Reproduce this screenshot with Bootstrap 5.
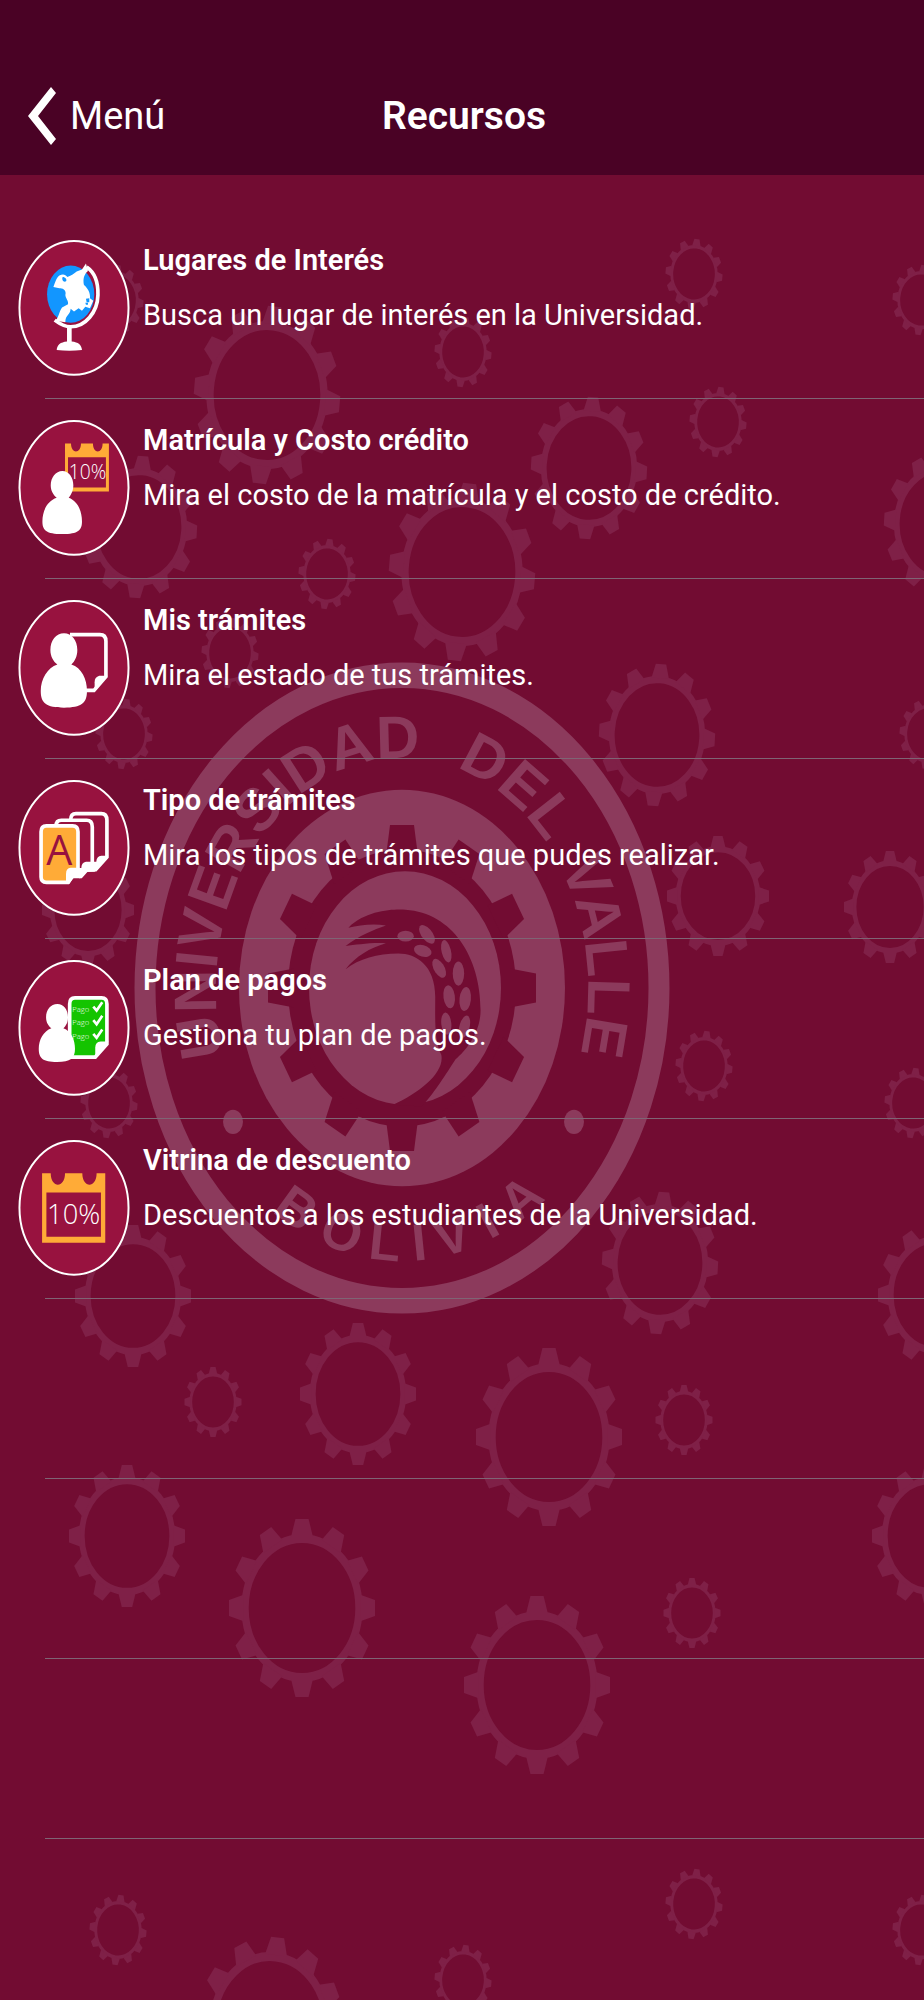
<!DOCTYPE html>
<html lang="es">
<head>
<meta charset="utf-8">
<meta name="viewport" content="width=device-width, initial-scale=1">
<title>Recursos</title>
<link href="https://cdn.jsdelivr.net/npm/bootstrap@5.3.0/dist/css/bootstrap.min.css" rel="stylesheet">
<script src="https://cdn.jsdelivr.net/npm/bootstrap@5.3.0/dist/js/bootstrap.bundle.min.js"></script>
<style>
  body { background: #720c32; color: #fff; font-family: Roboto, "Liberation Sans", sans-serif; }
  .backdrop { z-index: -1; }
  .topbar { background: #4a0225; height: 175px; padding: 56px 24px 0 28px; }
  .topbar .side { flex: 1 1 0; }
  .back-link { color: #fff; gap: 14px; font-size: 38px; line-height: 120px; }
  .topbar h1 { font-size: 39px; line-height: 120px; font-weight: 600; }
  .resources { padding-top: 44px; }
  .resource { height: 180px; padding: 21px 18px 0; }
  .resource::after { content: ""; position: absolute; left: 45px; right: 0; bottom: 0; height: 1px; background: #7f6474; }
  .resource a { gap: 13px; }
  .resource-icon { width: 112px; height: 136px; flex: none; }
  .resource h2, .resource p { font-size: 29px; line-height: 40px; }
  .resource h2 { margin-bottom: 15px; font-weight: 600; }
  .glyph { font-family: "Open Sans", sans-serif; font-weight: 300; }
  .seal-text { font-family: "Liberation Sans", sans-serif; font-weight: 700; font-size: 60px; }
  .seal-text.lower { font-size: 52px; }
</style>
</head>
<body>
<div class="position-relative min-vh-100 overflow-hidden">

<svg class="backdrop position-absolute top-0 start-0 w-100 h-100" viewBox="0 0 924 2000" preserveAspectRatio="xMidYMin slice" aria-hidden="true">
  <defs>
    <path id="tooth" d="M-15-80L-9-100H9L15-80z"/>
    <g id="gear" fill="#7f2047">
      <circle r="78" fill="none" stroke="#7f2047" stroke-width="10"/>
      <use href="#tooth"/><use href="#tooth" transform="rotate(30)"/><use href="#tooth" transform="rotate(60)"/>
      <use href="#tooth" transform="rotate(90)"/><use href="#tooth" transform="rotate(120)"/><use href="#tooth" transform="rotate(150)"/>
      <use href="#tooth" transform="rotate(180)"/><use href="#tooth" transform="rotate(210)"/><use href="#tooth" transform="rotate(240)"/>
      <use href="#tooth" transform="rotate(270)"/><use href="#tooth" transform="rotate(300)"/><use href="#tooth" transform="rotate(330)"/>
    </g>
    <g id="gs"><use href="#gear" transform="scale(.285 .35)"/></g>
    <g id="gst"><use href="#gear" transform="scale(.285 .35) rotate(6)"/></g>
    <g id="gm"><use href="#gear" transform="scale(.58 .71)"/></g>
    <g id="gmt"><use href="#gear" transform="scale(.58 .71) rotate(4)"/></g>
    <g id="gl"><use href="#gear" transform="scale(.73 .89)"/></g>
    <g id="glt"><use href="#gear" transform="scale(.73 .89) rotate(6)"/></g>
    <path id="notch" d="M-16-108L-12-134H12L16-108z"/>
    <path id="arcTop" d="M402 1218A186 230 0 0 1 402 758A186 230 0 0 1 402 1218"/>
    <path id="arcBottom" d="M176 988A226 273 0 0 0 628 988"/>
  </defs>

  <use href="#gst" x="694" y="274"/><use href="#gst" x="921" y="300"/><use href="#gst" x="115" y="300"/>
  <use href="#gst" x="463" y="352"/><use href="#gst" x="718" y="422"/><use href="#glt" x="267" y="395"/>
  <use href="#gmt" x="589" y="468"/><use href="#gmt" x="139" y="527"/><use href="#gmt" x="942" y="524"/>
  <use href="#gst" x="327" y="574"/><use href="#glt" x="462" y="572"/><use href="#gst" x="230" y="653"/>
  <use href="#gmt" x="657" y="735"/><use href="#gst" x="124" y="734"/><use href="#gst" x="928" y="734"/>
  <use href="#gear" transform="translate(88 910) scale(.46 .56)"/>
  <use href="#gear" transform="translate(718 896) scale(.51 .6)"/>
  <use href="#gear" transform="translate(890 907) scale(.46 .56)"/>
  <use href="#gst" x="704" y="1066"/><use href="#gst" x="913" y="1103"/><use href="#gst" x="109" y="1103"/>
  <use href="#gmt" x="660" y="1263"/><use href="#gm" x="936" y="1295"/><use href="#gm" x="133" y="1296"/>
  <use href="#gs" x="213" y="1402"/><use href="#gm" x="358" y="1394"/><use href="#gl" x="549" y="1437"/>
  <use href="#gs" x="684" y="1420"/><use href="#gm" x="127" y="1536"/><use href="#gm" x="930" y="1536"/>
  <use href="#gl" x="302" y="1608"/><use href="#gl" x="537" y="1685"/><use href="#gs" x="692" y="1613"/>
  <use href="#gst" x="694" y="1904"/><use href="#gst" x="118" y="1930"/><use href="#gst" x="921" y="1930"/>
  <use href="#gst" x="463" y="1980"/><use href="#glt" x="270" y="2026"/>

  <g fill="#8c3a5c">
    <g transform="translate(402 988) scale(1 1.217)">
      <circle r="257" fill="none" stroke="#8c3a5c" stroke-width="21"/>
      <circle r="163"/>
      <g fill="#720c32">
        <circle r="114"/>
        <use href="#notch"/><use href="#notch" transform="rotate(30)"/><use href="#notch" transform="rotate(60)"/>
        <use href="#notch" transform="rotate(90)"/><use href="#notch" transform="rotate(120)"/><use href="#notch" transform="rotate(150)"/>
        <use href="#notch" transform="rotate(180)"/><use href="#notch" transform="rotate(210)"/><use href="#notch" transform="rotate(240)"/>
        <use href="#notch" transform="rotate(270)"/><use href="#notch" transform="rotate(300)"/><use href="#notch" transform="rotate(330)"/>
      </g>
      <circle cx="3" r="96"/>
      <circle cx="-169" cy="110" r="10"/><circle cx="172" cy="110" r="10"/>
    </g>
    <g transform="translate(120 640) scale(.357 .446)">
      <path fill="#720c32" d="M640 645C690 605 770 603 800 605C930 612 1010 710 1010 830C1010 880 970 920 940 940C900 990 880 1015 845 1046L765 1042C840 1015 910 970 900 930C880 900 883 850 883 800C883 730 830 703 780 703C720 703 670 715 632 738C660 710 700 690 745 680C700 678 660 684 632 686C670 662 710 650 745 640C705 635 670 640 640 645z"/>
      <ellipse cx="800" cy="664" rx="23" ry="12"/>
      <ellipse rx="27" ry="14" transform="translate(860 660) rotate(42)"/>
      <ellipse rx="25" ry="13" transform="translate(848 697) rotate(12)"/>
      <ellipse rx="13" ry="26" transform="translate(914 698) rotate(-18)"/>
      <ellipse rx="14" ry="25" transform="translate(894 736) rotate(-40)"/>
      <ellipse rx="16" ry="27" transform="translate(948 748)"/>
      <ellipse rx="16" ry="26" transform="translate(922 800) rotate(-10)"/>
      <ellipse rx="16" ry="27" transform="translate(967 805) rotate(8)"/>
      <ellipse rx="14" ry="25" transform="translate(914 860) rotate(-8)"/>
      <ellipse rx="14" ry="26" transform="translate(965 867) rotate(20)"/>
    </g>
    <text class="seal-text"><textPath href="#arcTop" startOffset="19.8%">UNIVERSIDAD</textPath></text>
    <text class="seal-text"><textPath href="#arcTop" startOffset="54.2%">DEL</textPath></text>
    <text class="seal-text"><textPath href="#arcTop" startOffset="65.4%">VALLE</textPath></text>
    <text class="seal-text lower"><textPath href="#arcBottom" startOffset="31.8%">B</textPath><textPath href="#arcBottom" startOffset="38.8%">O</textPath><textPath href="#arcBottom" startOffset="45.6%">L</textPath><textPath href="#arcBottom" startOffset="51.5%">I</textPath><textPath href="#arcBottom" startOffset="55%">V</textPath><textPath href="#arcBottom" startOffset="61.6%">I</textPath><textPath href="#arcBottom" startOffset="65.7%">A</textPath></text>
  </g>
</svg>

<header class="topbar d-flex">
  <div class="side">
    <a href="#" class="back-link d-inline-flex align-items-center text-decoration-none">
      <svg width="28" height="58" viewBox="0 0 28 58" aria-hidden="true"><path d="M23 0L28 6L10 29L28 52L23 58L0 29z" fill="#fff"/></svg>
      <span>Menú</span>
    </a>
  </div>
  <h1 class="m-0">Recursos</h1>
  <div class="side"></div>
</header>

<main>
<ul class="resources list-unstyled m-0">
  <li class="resource position-relative">
    <a href="#" class="d-flex text-white text-decoration-none">
      <svg class="resource-icon" viewBox="54 57 336 409" aria-hidden="true">
        <ellipse cx="222" cy="261" rx="164" ry="201" fill="#98123f" stroke="#fff" stroke-width="6"/>
        <ellipse cx="212" cy="220" rx="71" ry="86" fill="#1296ff"/>
        <path fill="#fff" d="M258 128L264 150C252 160 248 175 252 192C262 200 272 215 270 232L280 240L270 262L256 258L246 270L236 262L222 272L212 264C210 285 196 282 196 304L166 300C176 290 178 270 186 260L204 250C206 240 196 232 196 222C200 210 190 200 178 202L160 198C166 185 168 172 178 164C188 158 196 160 202 168C215 164 222 158 230 152L246 146z"/>
        <path fill="#1296ff" d="M188 168C196 168 202 176 198 181C190 186 184 174 188 168zM258 234l10-2v12h-8zM256 246l8 0v6h-6z"/>
        <path fill="none" stroke="#fff" stroke-width="11" d="M260 138C285 155 295 185 294 222C293 275 255 318 212 318C195 318 180 310 164 298"/>
        <path fill="#fff" d="M201 318H215V362C235 364 245 372 246 388Q208 392 170 388C171 372 181 364 201 362z"/>
      </svg>
      <div><h2>Lugares de Interés</h2><p class="m-0">Busca un lugar de interés en la Universidad.</p></div>
    </a>
  </li>
  <li class="resource position-relative">
    <a href="#" class="d-flex text-white text-decoration-none">
      <svg class="resource-icon" viewBox="54 57 336 409" aria-hidden="true">
        <ellipse cx="222" cy="261" rx="164" ry="201" fill="#98123f" stroke="#fff" stroke-width="6"/>
        <path fill="#ffab37" fill-rule="evenodd" d="M195 128H213C213 160 243 160 243 128H279C279 160 308 160 308 128H327V272H195zM204 169V260H318V169z"/>
        <text class="glyph" x="206" y="235" font-size="58" fill="#fff">10%</text>
        <path fill="#fff" d="M187 210C207 210 220 230 220 253C220 270 213 282 206 291C232 300 246 330 246 362C246 388 235 400 187 400C138 400 127 388 127 362C127 330 142 300 170 291C160 282 152 270 152 253C152 230 167 210 187 210z"/>
      </svg>
      <div><h2>Matrícula y Costo crédito</h2><p class="m-0">Mira el costo de la matrícula y el costo de crédito.</p></div>
    </a>
  </li>
  <li class="resource position-relative">
    <a href="#" class="d-flex text-white text-decoration-none">
      <svg class="resource-icon" viewBox="54 598 336 409" aria-hidden="true">
        <ellipse cx="222" cy="802" rx="164" ry="201" fill="#98123f" stroke="#fff" stroke-width="6"/>
        <path fill="none" stroke="#fff" stroke-width="11" d="M210 702H300Q318 702 318 722V828L282 870H250"/>
        <path fill="#fff" d="M323 826H298Q284 830 284 845V874z"/>
        <path fill="#fff" d="M192 698C215 698 232 720 232 748C232 768 224 782 214 792C245 802 261 835 261 872C261 908 245 922 192 922C138 922 122 908 122 872C122 835 142 802 172 792C160 782 151 768 151 748C151 720 168 698 192 698z"/>
      </svg>
      <div><h2>Mis trámites</h2><p class="m-0">Mira el estado de tus trámites.</p></div>
    </a>
  </li>
  <li class="resource position-relative">
    <a href="#" class="d-flex text-white text-decoration-none">
      <svg class="resource-icon" viewBox="54 60 336 409" aria-hidden="true">
        <ellipse cx="222" cy="264" rx="164" ry="201" fill="#98123f" stroke="#fff" stroke-width="6"/>
        <g fill="#98123f" stroke="#fff" stroke-width="11">
          <path d="M212 180Q212 161 228 161H304Q321 161 321 181V292L287 330H212z"/>
          <path d="M168 198Q168 181 184 181H260Q277 181 277 201V312L243 350H168z"/>
        </g>
        <path fill="#fff" d="M326 288H304Q290 290 289 306L258 306Q244 309 244 325L212 325V340L240 356L258 337L284 336z"/>
        <path fill="#ffab37" stroke="#fff" stroke-width="11" d="M123 216Q123 198 139 198H218Q234 198 234 216V328L204 368H139Q123 368 123 352z"/>
        <path fill="#fff" d="M238 324H212Q198 326 198 342V373H208z"/>
        <text class="glyph fw-normal" x="178" y="316" font-size="124" text-anchor="middle" fill="#98123f">A</text>
      </svg>
      <div><h2>Tipo de trámites</h2><p class="m-0">Mira los tipos de trámites que pudes realizar.</p></div>
    </a>
  </li>
  <li class="resource position-relative">
    <a href="#" class="d-flex text-white text-decoration-none">
      <svg class="resource-icon" viewBox="54 601 336 409" aria-hidden="true">
        <ellipse cx="222" cy="805" rx="164" ry="201" fill="#98123f" stroke="#fff" stroke-width="6"/>
        <path fill="#14c400" stroke="#fff" stroke-width="11" d="M209 733Q209 715 225 715H305Q321 715 321 733V854L286 893H209z"/>
        <path fill="#fff" d="M326 846H302Q286 848 286 864V898z"/>
        <g class="glyph" font-size="23" fill="#fff"><text x="217" y="756">Pago</text><text x="217" y="797">Pago</text><text x="217" y="838">Pago</text></g>
        <path fill="none" stroke="#fff" stroke-width="8" d="M280 741L290 753L307 728M280 782L290 794L307 769M280 823L290 835L307 810"/>
        <path fill="#fff" d="M172 733C191 733 204 750 204 773C204 790 197 800 190 806C214 815 225 840 225 868C225 896 212 908 171 908C128 908 116 896 116 868C116 840 130 815 154 806C146 800 138 790 138 773C138 750 152 733 172 733z"/>
      </svg>
      <div><h2>Plan de pagos</h2><p class="m-0">Gestiona tu plan de pagos.</p></div>
    </a>
  </li>
  <li class="resource position-relative">
    <a href="#" class="d-flex text-white text-decoration-none">
      <svg class="resource-icon" viewBox="54 60 336 409" aria-hidden="true">
        <ellipse cx="222" cy="264" rx="164" ry="201" fill="#98123f" stroke="#fff" stroke-width="6"/>
        <path fill="#ffab37" fill-rule="evenodd" d="M126 160H152C152 206 195 206 195 160H247C247 206 290 206 290 160H316V369H126zM139 218V351H303V218z"/>
        <text class="glyph" x="221" y="313" font-size="82" text-anchor="middle" fill="#fff">10%</text>
      </svg>
      <div><h2>Vitrina de descuento</h2><p class="m-0">Descuentos a los estudiantes de la Universidad.</p></div>
    </a>
  </li>
  <li class="resource position-relative"></li>
  <li class="resource position-relative"></li>
  <li class="resource position-relative"></li>
</ul>
</main>
</div>
</body>
</html>
